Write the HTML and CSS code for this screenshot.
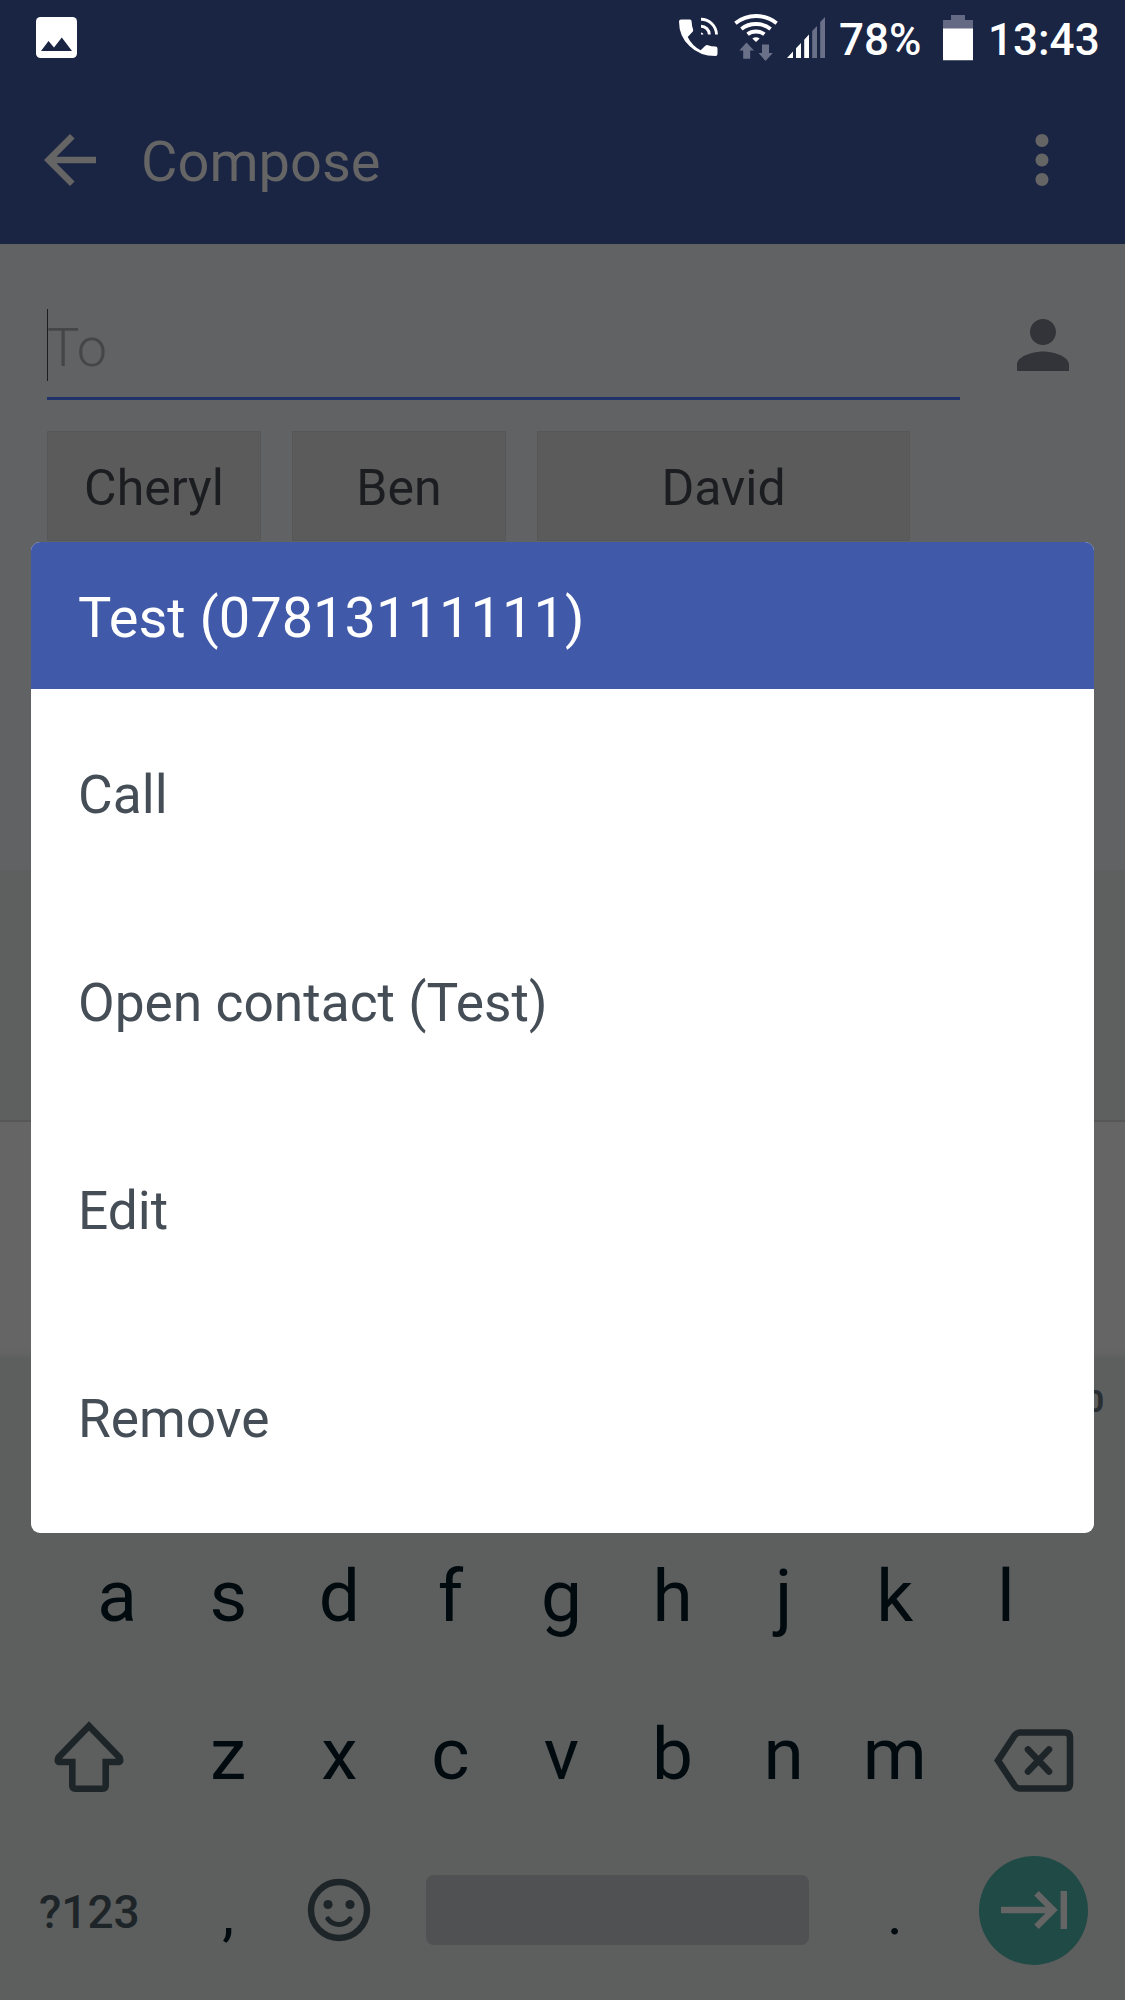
FILE: index.html
```
<!DOCTYPE html>
<html lang="en">
<head>
  <meta charset="UTF-8">
  <meta name="viewport" content="width=device-width, initial-scale=1.0">
  <title>Compose</title>
  <link rel="stylesheet" href="styles.css">
</head>
<body>
  <div class="status-bar">
    <svg class="photo-icon" width="41" height="41" viewBox="0 0 41 41">
      <rect width="41" height="41" rx="4.5" fill="#fff"/>
      <path d="M5 34 12.500 24 18 30.500 25.800 20.500 36 34z" fill="#1a2443"/>
    </svg>
    <div class="status-right">
      <svg class="call-icon" width="40" height="41" viewBox="0 0 40 41">
        <path d="M2 2.500h9q1.500 0 1.600 2 .2 4.500 1.500 8 .4 1.500-.7 2.600l-4.700 5q4.500 9 13 13.200l4.600-4.500q1.100-1 2.600-.6 3.500 1.200 7.600 1.400 2 0 2 2v5.500q0 1.900-2 1.900Q20.500 39 10.500 29 0 19.500 0 4.500q0-2 2-2z" fill="#fff"/>
        <g fill="none" stroke="#fff" stroke-width="2.900">
          <path d="M22 15.500v2H24.500A3 3 0 0 0 22 15.500z" fill="#fff" stroke="none"/>
          <path d="M22 9.200A8.300 8.300 0 0 1 30.300 17.500"/>
          <path d="M22 2.300A15.500 15.500 0 0 1 37.500 17.500"/>
        </g>
      </svg>
      <svg class="wifi-icon" width="44" height="48" viewBox="0 0 44 48">
        <g fill="none" stroke="#fff" stroke-width="3.800">
          <path d="M1.400 9.200Q10.500 2 22 2T42.600 9.200"/>
          <path d="M7.400 15Q13.500 10 22 10T36.600 15"/>
          <path d="M13.600 20.300Q17 17.500 22 17.500T30.400 20.300"/>
        </g>
        <path d="M18.300 24.600Q22 22 25.700 24.600L22 28z" fill="#fff"/>
        <path d="M12.500 28.500 20 36.500h-3.800v8.200h-7v-8.200H5.300zM31.500 47 24.500 39H28v-8.500h7V39h3.800z" fill="#6a7088"/>
      </svg>
      <svg class="signal-icon" width="38" height="41" viewBox="0 0 38 41">
        <path d="M0 41 6 34.500V41zM9 31.300 14 26V41H9zM17.200 22.800 22 17.500V41h-4.800z" fill="#fff"/>
        <path d="M25.200 14 30 9V41h-4.800zM33.200 5 38 0V41h-4.800z" fill="#6a7088"/>
      </svg>
      <span class="status-text battery-level">78%</span>
      <svg class="battery-icon" width="30" height="46" viewBox="0 0 30 46">
        <path d="M8 0H22V5H30V14H0V5H8z" fill="#646a83"/>
        <path d="M0 13.500H30V45.300H0z" fill="#fff"/>
      </svg>
      <span class="status-text clock">13:43</span>
    </div>
  </div>

  <header class="app-bar">
    <svg class="back-icon" width="78" height="78" viewBox="0 0 24 24" fill="#656565">
      <path d="M20 11H7.830l5.590-5.590L12 4l-8 8 8 8 1.410-1.410L7.830 13H20v-2z"/>
    </svg>
    <h1>Compose</h1>
    <svg class="more-icon" width="78" height="78" viewBox="0 0 24 24" fill="#656565">
      <path d="M12 8c1.100 0 2-.9 2-2s-.9-2-2-2-2 .9-2 2 .9 2 2 2zm0 2c-1.100 0-2 .9-2 2s.9 2 2 2 2-.9 2-2-.9-2-2-2zm0 6c-1.100 0-2 .9-2 2s.9 2 2 2 2-.9 2-2-.9-2-2-2z"/>
    </svg>
  </header>

  <main class="compose">
    <div class="recipient-row">
      <div class="to-field">To</div>
      <svg class="person-icon" width="78" height="78" viewBox="0 0 24 24" fill="#333439">
        <path d="M12 12c2.210 0 4-1.790 4-4s-1.790-4-4-4-4 1.790-4 4 1.790 4 4 4zm0 2c-2.670 0-8 1.340-8 4v2h16v-2c0-2.660-5.330-4-8-4z"/>
      </svg>
    </div>
    <div class="suggestions">
      <button class="chip">Cheryl</button>
      <button class="chip">Ben</button>
      <button class="chip chip-wide">David</button>
    </div>
  </main>

  <div class="message-area"></div>
  <div class="candidates"></div>

  <div class="keyboard">
    <div class="key-row top-row"><span class="hint">0</span></div>
    <div class="key-row home-row">
      <span class="key">a</span>
      <span class="key">s</span>
      <span class="key">d</span>
      <span class="key">f</span>
      <span class="key">g</span>
      <span class="key">h</span>
      <span class="key">j</span>
      <span class="key">k</span>
      <span class="key">l</span>
    </div>
    <div class="key-row">
      <span class="key wide shift">
        <svg width="72" height="74" viewBox="0 0 72 74" fill="none" stroke="#1e2529" stroke-width="6.600">
          <path d="M36 6 66.500 37.500Q68.500 42 65 42H52.700V65.500Q52.700 68.700 49.500 68.700H22.500Q19.300 68.700 19.300 65.500V42H7Q3.500 42 5.500 37.500z"/>
        </svg>
      </span>
      <span class="key">z</span>
      <span class="key">x</span>
      <span class="key">c</span>
      <span class="key">v</span>
      <span class="key">b</span>
      <span class="key">n</span>
      <span class="key">m</span>
      <span class="key wide backspace">
        <svg width="80" height="63" viewBox="0 0 80 63" fill="none" stroke="#1e2529" stroke-width="6.600">
          <path d="M4 31.500 20.500 6.500Q22.500 3.500 26 3.500H71Q76 3.500 76 8.500V54.500Q76 59.500 71 59.500H26Q22.500 59.500 20.500 56.500z"/>
          <path d="M34 20.500 55 42.500M55 20.500 34 42.500" stroke-linecap="round"/>
        </svg>
      </span>
    </div>
    <div class="key-row bottom-row">
      <span class="key wide symbols">?123</span>
      <span class="key punctuation">,</span>
      <span class="key emoji">
        <svg width="64" height="64" viewBox="0 0 64 64">
          <circle cx="32" cy="32" r="28" fill="none" stroke="#1e2529" stroke-width="6.400"/>
          <circle cx="21" cy="26.500" r="4.600" fill="#1e2529"/>
          <circle cx="43" cy="26.500" r="4.600" fill="#1e2529"/>
          <path d="M21 41Q25 46.500 32 46.500T43 41" fill="none" stroke="#1e2529" stroke-width="5" stroke-linecap="round"/>
        </svg>
      </span>
      <span class="key space"><span class="space-bar"></span></span>
      <span class="key punctuation">.</span>
      <span class="key wide enter">
        <span class="enter-circle">
          <svg width="66" height="38" viewBox="0 0 66 38" fill="none" stroke="#656565" stroke-width="6.400">
            <path d="M0 19H52M35.500 2.300 52.200 19 35.500 35.700M62.800 0V38"/>
          </svg>
        </span>
      </span>
    </div>
  </div>

  <div class="dialog">
    <h2>Test (07813111111)</h2>
    <ul>
      <li>Call</li>
      <li>Open contact (Test)</li>
      <li>Edit</li>
      <li>Remove</li>
    </ul>
  </div>
</body>
</html>
```
FILE: styles.css
```
:root {
  --bar: #1a2443;
  --page: #616263;
  --keyboard: #5d5f5e;
  --icon: #656565;
  --accent: #4059a9;
}

* {
  box-sizing: border-box;
  margin: 0;
  padding: 0;
}

body {
  position: relative;
  display: flex;
  flex-direction: column;
  width: 1125px;
  height: 2000px;
  overflow: hidden;
  font-family: Roboto, "Liberation Sans", sans-serif;
  background: var(--page);
}

svg {
  display: block;
  flex: none;
}

/* Status bar */
.status-bar {
  display: flex;
  justify-content: space-between;
  height: 78px;
  padding: 0 28px 0 36px;
  background: var(--bar);
}

.photo-icon {
  margin-top: 17px;
}

.status-right {
  display: flex;
  align-items: flex-start;
}

.call-icon {
  margin: 17px 15px 0 0;
}

.wifi-icon {
  margin: 14px 9px 0 0;
}

.signal-icon {
  margin: 17px 14px 0 0;
}

.status-text {
  height: 78px;
  font-size: 44px;
  font-weight: 500;
  line-height: 80px;
  color: #fff;
}

.battery-level {
  width: 104px;
}

.battery-icon {
  margin: 15px 15px 0 0;
}

.clock {
  width: 109px;
}

/* App bar */
.app-bar {
  display: flex;
  align-items: center;
  height: 166px;
  padding: 0 44px 3px 31px;
  background: var(--bar);
}

.app-bar h1 {
  flex: 1;
  padding: 4px 0 0 32px;
  font-size: 56px;
  font-weight: 400;
  color: var(--icon);
}

/* Recipients */
.compose {
  height: 626px;
  padding: 62px 43px 0 47px;
}

.recipient-row {
  display: flex;
  justify-content: space-between;
}

.to-field {
  position: relative;
  width: 913px;
  height: 94px;
  border-bottom: 3px solid #22336b;
  font-size: 54px;
  font-weight: 300;
  line-height: 84px;
  color: #454647;
}

.to-field::before {
  content: "";
  position: absolute;
  left: 0;
  top: 3px;
  width: 1px;
  height: 72px;
  background: #1c1d20;
}

.suggestions {
  display: flex;
  gap: 31px;
  margin-top: 31px;
}

.chip {
  width: 214px;
  height: 110px;
  padding-top: 4px;
  border: 1px solid #575757;
  background: #5b5b5b;
  font-family: inherit;
  font-size: 50px;
  color: #1c1d21;
}

.chip-wide {
  width: 373px;
}

.message-area {
  height: 252px;
  border-bottom: 2px solid #565757;
  background: #5e605f;
}

.candidates {
  height: 236px;
  background: linear-gradient(#656565 226px, #5f6160);
}

/* Keyboard */
.keyboard {
  flex: 1;
  padding: 4px 8px 0 6px;
  background: var(--keyboard);
}

.key-row {
  display: flex;
  height: 158px;
}

.top-row {
  justify-content: flex-end;
  padding: 20px 13px 0 0;
}

.hint {
  font-size: 32px;
  font-weight: 700;
  color: #282e31;
}

.home-row {
  justify-content: center;
}

.bottom-row {
  height: 148px;
}

.key {
  display: flex;
  align-items: center;
  justify-content: center;
  width: 111.1px;
  padding-bottom: 7px;
  font-size: 73px;
  color: #010b0f;
}

.bottom-row .key {
  padding-bottom: 0;
}

.wide {
  width: 166.6px;
}

.backspace {
  padding: 6px 0 0;
}

.shift {
  padding-bottom: 0;
}

.key-row .symbols {
  padding-top: 4px;
  font-size: 46px;
  font-weight: 500;
  color: #1e2529;
}

.punctuation {
  padding-top: 7px;
  font-size: 60px;
}

.space {
  width: 444.5px;
}

.space-bar {
  width: 383px;
  height: 70px;
  border-radius: 8px;
  background: #505152;
}

.enter-circle {
  display: flex;
  align-items: center;
  justify-content: center;
  flex: none;
  width: 109px;
  height: 109px;
  border-radius: 50%;
  background: #204a46;
}

/* Contact menu */
.dialog {
  position: absolute;
  left: 31px;
  top: 542px;
  width: 1063px;
  height: 991px;
  overflow: hidden;
  border-radius: 9px;
  background: #fff;
}

.dialog h2 {
  height: 147px;
  padding-left: 47px;
  background: var(--accent);
  font-size: 56px;
  font-weight: 400;
  line-height: 153px;
  color: #fff;
}

.dialog ul {
  padding-top: 2px;
  list-style: none;
}

.dialog li {
  height: 208px;
  padding-left: 47px;
  font-size: 53.3px;
  line-height: 208px;
  color: #454e56;
}
```
